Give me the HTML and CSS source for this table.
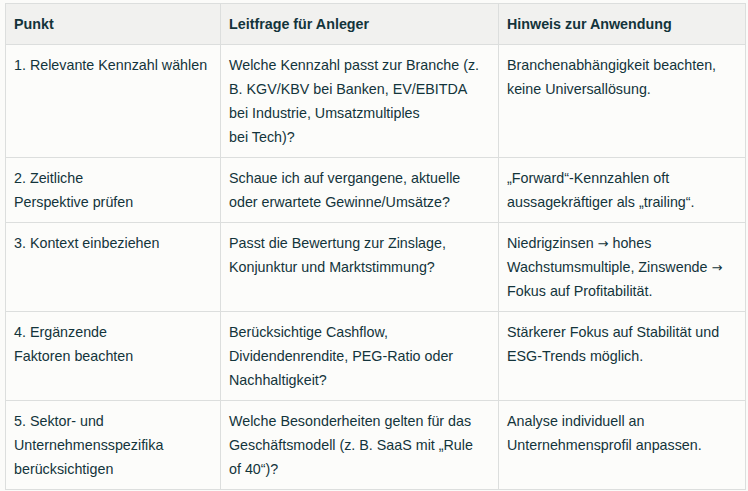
FILE: index.html
```html
<!DOCTYPE html>
<html lang="de">
<head>
<meta charset="utf-8">
<link rel="stylesheet" href="styles.css">
</head>
<body>
<table class="grid">
  <colgroup>
    <col class="c1"><col class="c2"><col class="c3">
  </colgroup>
  <thead>
    <tr><th>Punkt</th><th>Leitfrage für Anleger</th><th>Hinweis zur Anwendung</th></tr>
  </thead>
  <tbody>
    <tr>
      <td>1. Relevante Kennzahl wählen</td>
      <td>Welche Kennzahl passt zur Branche (z. B. KGV/KBV bei Banken, EV/EBITDA bei Industrie, Umsatzmultiples<br>bei Tech)?</td>
      <td>Branchenabhängigkeit beachten, keine Universallösung.</td>
    </tr>
    <tr>
      <td>2. Zeitliche<br>Perspektive prüfen</td>
      <td>Schaue ich auf vergangene, aktuelle oder erwartete Gewinne/Umsätze?</td>
      <td>„Forward“-Kennzahlen oft aussagekräftiger als „trailing“.</td>
    </tr>
    <tr>
      <td>3. Kontext einbeziehen</td>
      <td>Passt die Bewertung zur Zinslage, Konjunktur und Marktstimmung?</td>
      <td>Niedrigzinsen <span class="arr">→</span> hohes Wachstumsmultiple, Zinswende <span class="arr">→</span> Fokus auf Profitabilität.</td>
    </tr>
    <tr>
      <td>4. Ergänzende<br>Faktoren beachten</td>
      <td>Berücksichtige Cashflow, Dividendenrendite, PEG-Ratio oder Nachhaltigkeit?</td>
      <td>Stärkerer Fokus auf Stabilität und ESG-Trends möglich.</td>
    </tr>
    <tr>
      <td>5. Sektor- und<br>Unternehmensspezifika<br>berücksichtigen</td>
      <td>Welche Besonderheiten gelten für das Geschäftsmodell (z. B. SaaS mit „Rule of 40“)?</td>
      <td>Analyse individuell an Unternehmensprofil anpassen.</td>
    </tr>
  </tbody>
</table>
</body>
</html>
```
FILE: styles.css
```css
html, body {
  background: #fbfbf9;
}
body {
  margin: 0;
  padding: 3px 0 0 5px;
  font-family: "Liberation Sans", Arial, sans-serif;
  font-size: 14.3px;
  color: #13343b;
}
.grid {
  border-collapse: collapse;
  width: 740px;
  table-layout: fixed;
}
.c1 { width: 215px; }
.c2 { width: 278px; }
.c3 { width: 247px; }
.grid th, .grid td {
  border: 1px solid #dcdedd;
  padding: 8px;
  line-height: 24px;
  text-align: left;
  vertical-align: top;
}
.grid td:nth-child(2) {
  padding-right: 14px;
}
.grid th {
  background: #f1f1ef;
  font-weight: 700;
}
.grid td {
  background: #fcfcfa;
}
.arr {
  font-family: "DejaVu Sans", sans-serif;
  font-size: 13px;
  line-height: 1;
}
```
